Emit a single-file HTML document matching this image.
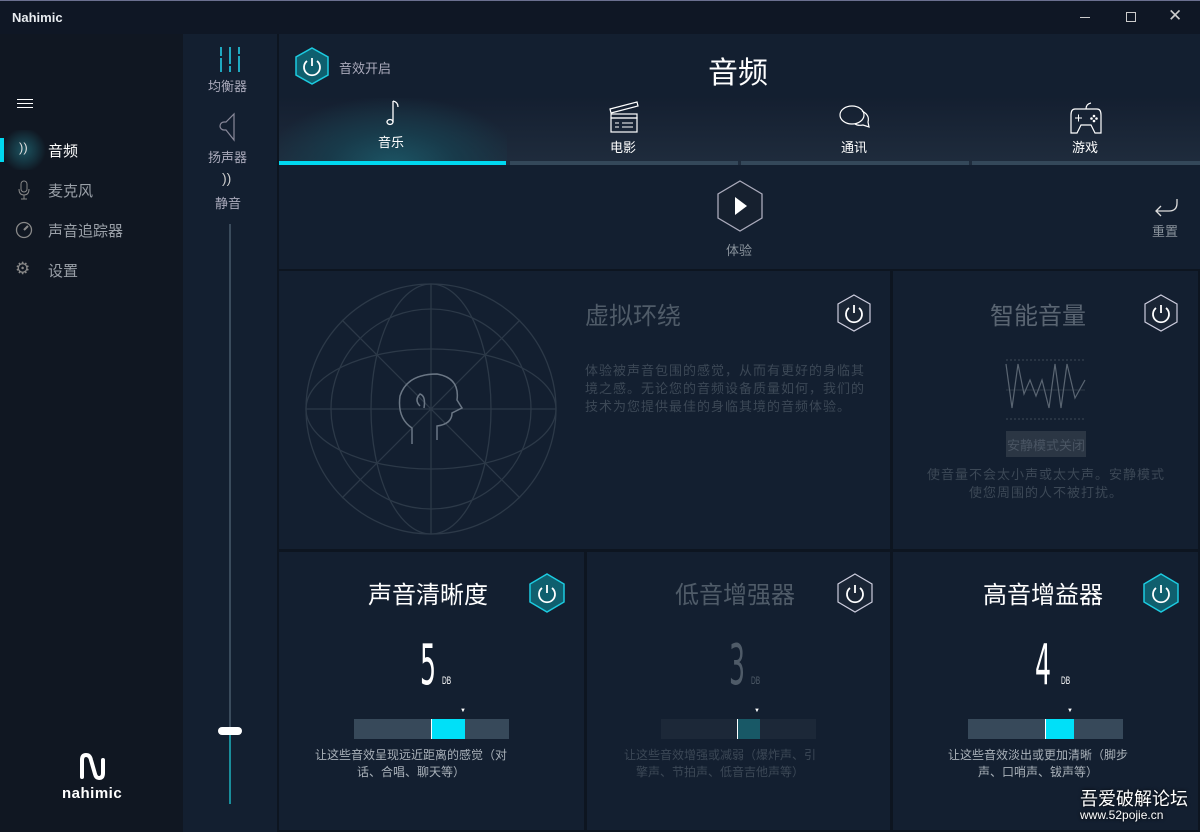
<!DOCTYPE html>
<html><head><meta charset="utf-8"><style>
*{margin:0;padding:0;box-sizing:border-box}
body{width:1200px;height:832px;background:#0d1520;font-family:"Liberation Sans","Noto Sans CJK SC",sans-serif;position:relative;overflow:hidden;color:#fff}
.a{position:absolute}
.t{position:absolute;white-space:nowrap}
.panel{position:absolute;background:#131f30}
.hex{position:absolute}
.num{position:absolute;white-space:nowrap;font-family:"DejaVu Sans","Liberation Sans",sans-serif;font-size:56px;line-height:56px;transform:scaleX(0.45);transform-origin:left}
</style></head><body>
<div class="a" style="left:0;top:0;width:1200px;height:34px;background:#0f1725;border-top:1px solid #6b7090"></div>
<div class="t" style="left:12px;top:10px;font-size:13px;font-weight:bold;color:#e8ecf0">Nahimic</div>
<div class="a" style="left:1080px;top:17px;width:10px;height:1px;background:#ccc"></div>
<div class="a" style="left:1126px;top:12px;width:10px;height:10px;border:1px solid #ccc"></div>
<div class="t" style="left:1168px;top:6px;font-size:17px;color:#ccc">✕</div>
<div class="a" style="left:0;top:34px;width:183px;height:798px;background:#101722"></div>
<div class="a" style="left:17px;top:99px;width:16px;height:1px;background:#fff;box-shadow:0 4px 0 #fff,0 8px 0 #fff"></div>
<div class="a" style="left:0;top:130px;width:50px;height:40px;background:radial-gradient(circle at 24px 20px,#1c5360 0,#153440 12px,rgba(16,23,34,0) 22px)"></div>
<div class="a" style="left:0;top:138px;width:4px;height:24px;background:#00d8f0"></div>
<div class="t" style="left:19px;top:140px;font-size:13px;color:#ddd">))</div>
<div class="t" style="left:48px;top:140px;font-size:15px;color:#fff">音频</div>
<svg class="a" style="left:17px;top:180px" width="14" height="20"><rect x="4" y="1" width="6" height="11" rx="3" stroke="#888" fill="none"/><path d="M2 9 Q2 15 7 15 Q12 15 12 9 M7 15V19M4 19H10" stroke="#888" fill="none"/></svg>
<div class="t" style="left:48px;top:180px;font-size:15px;color:#9aa0a8">麦克风</div>
<svg class="a" style="left:15px;top:221px" width="18" height="18"><circle cx="9" cy="9" r="7.5" stroke="#888" stroke-width="1.3" fill="none"/><path d="M9 9 L13 5" stroke="#888" stroke-width="2"/></svg>
<div class="t" style="left:48px;top:220px;font-size:15px;color:#9aa0a8">声音追踪器</div>
<div class="t" style="left:15px;top:259px;font-size:17px;color:#888">⚙</div>
<div class="t" style="left:48px;top:260px;font-size:15px;color:#9aa0a8">设置</div>
<svg class="a" style="left:78px;top:752px" width="30" height="30"><path d="M4 25 V8 Q4 3 8 3 Q12 3 13 8 L17 22 Q18 26 21 26 Q25 26 25 21 V8" stroke="#fff" stroke-width="4" fill="none" stroke-linecap="round"/></svg>
<div class="t" style="left:62px;top:785px;font-size:15px;font-weight:bold;color:#fff;letter-spacing:0.5px">nahimic</div>
<div class="a" style="left:183px;top:34px;width:94px;height:798px;background:#131f30"></div>
<svg class="a" style="left:218px;top:47px" width="24" height="25"><g stroke="#1fa9c0" stroke-width="2"><path d="M3 0V25M12 0V25M21 0V25"/></g><g stroke="#131f30" stroke-width="2"><path d="M3 9v2M12 17v2M21 7v2"/></g></svg>
<div class="t" style="left:208px;top:76px;font-size:13px;color:#aab">均衡器</div>
<svg class="a" style="left:218px;top:112px" width="24" height="30"><path d="M6 10 A4 4 0 0 0 6 18 L8 18 L16 28 V2 L8 10 Z" stroke="#889" stroke-width="1.2" fill="none"/></svg>
<div class="t" style="left:208px;top:147px;font-size:13px;color:#aab">扬声器</div>
<div class="t" style="left:222px;top:170px;font-size:14px;color:#ccc">))</div>
<div class="t" style="left:215px;top:193px;font-size:13px;color:#aab">静音</div>
<div class="a" style="left:229px;top:224px;width:2px;height:508px;background:#3a4b5c"></div>
<div class="a" style="left:229px;top:732px;width:2px;height:72px;background:#1a8d9a"></div>
<div class="a" style="left:218px;top:727px;width:24px;height:8px;background:#fff;border-radius:4px"></div>
<div class="panel" style="left:279px;top:34px;width:921px;height:235px"></div>
<div class="a" style="left:279px;top:98px;width:921px;height:67px;background:linear-gradient(#141f30,#1f2c3d)"></div>
<div class="a" style="left:279px;top:98px;width:228px;height:64px;background:radial-gradient(ellipse 130px 70px at 114px 68px,#1c5565 0,#183a4a 50%,rgba(25,40,55,0) 100%)"></div>
<svg class="hex" style="left:294px;top:47px" width="36" height="38"><polygon points="18,1 34,10 34,28 18,37 2,28 2,10" fill="#0f5f6e" stroke="#1ccbe0" stroke-width="1.5"/><path d="M13 14 A8 8 0 1 0 23 14" stroke="#fff" stroke-width="1.8" fill="none"/><path d="M18 11V19" stroke="#fff" stroke-width="1.8"/></svg>
<div class="t" style="left:339px;top:58px;font-size:13px;color:#aab">音效开启</div>
<div class="t" style="left:708px;top:48px;font-size:30px;color:#fff">音频</div>
<div class="a" style="left:279px;top:161px;width:227px;height:4px;background:#00d8f0"></div>
<div class="a" style="left:510px;top:161px;width:228px;height:4px;background:#34485a"></div>
<div class="a" style="left:741px;top:161px;width:228px;height:4px;background:#34485a"></div>
<div class="a" style="left:972px;top:161px;width:228px;height:4px;background:#34485a"></div>
<svg class="a" style="left:386px;top:99px" width="16" height="28"><path d="M7 2V23 M7 2 Q12 3 12 8" stroke="#fff" stroke-width="1.3" fill="none"/><ellipse cx="4" cy="23" rx="3" ry="2.5" stroke="#fff" stroke-width="1.3" fill="none"/></svg>
<div class="t" style="left:378px;top:132px;font-size:13px;color:#fff">音乐</div>
<svg class="a" style="left:607px;top:101px" width="34" height="32"><path d="M3 8 L30 1 L31 5 L4 12 Z" stroke="#fff" stroke-width="1.2" fill="none"/><rect x="4" y="13" width="26" height="4" stroke="#fff" stroke-width="1.2" fill="none"/><rect x="4" y="17" width="26" height="14" stroke="#fff" stroke-width="1.2" fill="none"/><path d="M15 22H26M15 26H26M8 22h4M8 26h4" stroke="#fff"/></svg>
<div class="t" style="left:610px;top:137px;font-size:13px;color:#fff">电影</div>
<svg class="a" style="left:838px;top:104px" width="34" height="26"><ellipse cx="14" cy="11" rx="12" ry="9" stroke="#fff" stroke-width="1.2" fill="none"/><path d="M24 7 Q32 11 30 18 L31 23 L25 21 Q20 22 17 20" stroke="#fff" stroke-width="1.2" fill="none"/></svg>
<div class="t" style="left:841px;top:137px;font-size:13px;color:#fff">通讯</div>
<svg class="a" style="left:1069px;top:101px" width="34" height="33"><path d="M17 8 Q17 3 22 2 M6 8 H28 Q32 8 32 14 L32 32 L26 32 L22 24 H12 L8 32 H2 L2 14 Q2 8 6 8 Z" stroke="#fff" stroke-width="1.2" fill="none"/><path d="M6 17h7M9.5 13.5v7" stroke="#fff"/><circle cx="25" cy="15" r="1.3" fill="#fff"/><circle cx="25" cy="20" r="1.3" fill="#fff"/><circle cx="22.5" cy="17.5" r="1.3" fill="#fff"/><circle cx="27.5" cy="17.5" r="1.3" fill="#fff"/></svg>
<div class="t" style="left:1072px;top:137px;font-size:13px;color:#fff">游戏</div>
<svg class="hex" style="left:716px;top:180px" width="48" height="52"><polygon points="24,1 46,14 46,38 24,51 2,38 2,14" fill="#16202f" stroke="#aab" stroke-width="1.3"/><path d="M19 17 L31 26 L19 35 Z" fill="#fff"/></svg>
<div class="t" style="left:726px;top:240px;font-size:13px;color:#8a939c">体验</div>
<svg class="a" style="left:1153px;top:197px" width="26" height="20"><path d="M24 2 V6 Q24 14 16 14 H3 M8 9 L3 14 L8 19" stroke="#ddd" stroke-width="1.3" fill="none"/></svg>
<div class="t" style="left:1152px;top:221px;font-size:13px;color:#8a939c">重置</div>
<div class="panel" style="left:279px;top:271px;width:611px;height:278px"></div>
<svg class="a" style="left:302px;top:278px" width="258" height="262"><g stroke="#2c3948" stroke-width="1.3" fill="none"><circle cx="129" cy="131" r="125"/><ellipse cx="129" cy="131" rx="125" ry="60"/><ellipse cx="129" cy="131" rx="60" ry="125"/><ellipse cx="129" cy="131" rx="100" ry="100"/><path d="M4 131H254M129 6V256M40 42L218 220M218 42L40 220"/></g><g stroke="#6b7785" stroke-width="1.5" fill="none"><path d="M135 162 L135 148 Q150 146 150 135 L160 130 L155 122 Q158 100 135 96 Q105 96 98 118 Q95 140 110 150 L110 166"/><path d="M118 128 Q112 122 118 116 Q124 118 122 130"/></g></svg>
<div class="t" style="left:585px;top:296px;font-size:24px;color:#4f5b68">虚拟环绕</div>
<svg class="hex" style="left:836px;top:294px" width="36" height="38"><polygon points="18,1 34,10 34,28 18,37 2,28 2,10" fill="#1a2535" stroke="#ccd" stroke-width="1.2"/><path d="M13 14 A8 8 0 1 0 23 14" stroke="#fff" stroke-width="1.8" fill="none"/><path d="M18 11V19" stroke="#fff" stroke-width="1.8"/></svg>
<div class="a" style="left:585px;top:362px;width:290px;font-size:13px;letter-spacing:1px;line-height:18px;color:#3c4856">体验被声音包围的感觉，从而有更好的身临其境之感。无论您的音频设备质量如何，我们的技术为您提供最佳的身临其境的音频体验。</div>
<div class="panel" style="left:893px;top:271px;width:305px;height:278px"></div>
<div class="t" style="left:990px;top:296px;font-size:24px;color:#5a6572">智能音量</div>
<svg class="hex" style="left:1143px;top:294px" width="36" height="38"><polygon points="18,1 34,10 34,28 18,37 2,28 2,10" fill="#1a2535" stroke="#ccd" stroke-width="1.2"/><path d="M13 14 A8 8 0 1 0 23 14" stroke="#fff" stroke-width="1.8" fill="none"/><path d="M18 11V19" stroke="#fff" stroke-width="1.8"/></svg>
<svg class="a" style="left:1005px;top:358px" width="82" height="62"><path d="M1 2H80M1 61H80" stroke="#3d4856" stroke-dasharray="2 2"/><path d="M1 32H80" stroke="#2c3846"/><path d="M1 6 L7 50 L13 6 L19 36 L25 22 L31 38 L37 22 L44 50 L50 6 L56 50 L62 6 L70 40 L80 22" stroke="#5a6572" stroke-width="1.2" fill="none"/></svg>
<div class="a" style="left:1006px;top:431px;width:80px;height:26px;background:#2b3644"></div>
<div class="t" style="left:1007px;top:435px;font-size:13px;color:#4a5563">安静模式关闭</div>
<div class="a" style="left:926px;top:466px;width:240px;text-align:center;font-size:13px;letter-spacing:1px;line-height:18px;color:#3c4856">使音量不会太小声或太大声。安静模式使您周围的人不被打扰。</div>
<div class="panel" style="left:279px;top:552px;width:305px;height:278px"></div>
<div class="panel" style="left:587px;top:552px;width:303px;height:278px"></div>
<div class="panel" style="left:893px;top:552px;width:305px;height:278px"></div>

<div class="t" style="left:368px;top:575px;font-size:24px;color:#fff">声音清晰度</div>
<svg class="hex" style="left:528px;top:573px" width="38" height="40"><polygon points="19,1 36,11 36,29 19,39 2,29 2,11" fill="#0f5f6e" stroke="#1ccbe0" stroke-width="1.5"/><path d="M14 15 A8 8 0 1 0 24 15" stroke="#fff" stroke-width="1.8" fill="none"/><path d="M19 12V20" stroke="#fff" stroke-width="1.8"/></svg>
<div class="num" style="left:420px;top:638px;color:#fff">5</div>
<div class="t" style="left:442px;top:675px;font-size:11px;color:#fff;transform:scaleX(.6);transform-origin:left">DB</div>
<div class="a" style="left:354px;top:719px;width:155px;height:20px;background:#37495a"></div>
<div class="a" style="left:431px;top:719px;width:34px;height:20px;background:#00e0f8;border-left:1px solid #fff"></div>
<div class="t" style="left:460px;top:708px;font-size:6px;color:#fff">▼</div>
<div class="a" style="left:312px;top:747px;width:198px;text-align:center;font-size:12px;line-height:17px;color:#a9b1b9">让这些音效呈现远近距离的感觉（对话、合唱、聊天等）</div>

<div class="t" style="left:675px;top:575px;font-size:24px;color:#4f5b68">低音增强器</div>
<svg class="hex" style="left:836px;top:573px" width="38" height="40"><polygon points="19,1 36,11 36,29 19,39 2,29 2,11" fill="#1a2535" stroke="#ccd" stroke-width="1.2"/><path d="M14 15 A8 8 0 1 0 24 15" stroke="#fff" stroke-width="1.8" fill="none"/><path d="M19 12V20" stroke="#fff" stroke-width="1.8"/></svg>
<div class="num" style="left:729px;top:638px;color:#4f5b68">3</div>
<div class="t" style="left:751px;top:675px;font-size:11px;color:#4f5b68;transform:scaleX(.6);transform-origin:left">DB</div>
<div class="a" style="left:661px;top:719px;width:155px;height:20px;background:#1c2838"></div>
<div class="a" style="left:737px;top:719px;width:23px;height:20px;background:#185866;border-left:1px solid #fff"></div>
<div class="t" style="left:754px;top:708px;font-size:6px;color:#fff">▼</div>
<div class="a" style="left:620px;top:747px;width:200px;text-align:center;font-size:12px;line-height:17px;color:#3c4856">让这些音效增强或减弱（爆炸声、引擎声、节拍声、低音吉他声等）</div>

<div class="t" style="left:983px;top:575px;font-size:24px;color:#fff">高音增益器</div>
<svg class="hex" style="left:1142px;top:573px" width="38" height="40"><polygon points="19,1 36,11 36,29 19,39 2,29 2,11" fill="#0f5f6e" stroke="#1ccbe0" stroke-width="1.5"/><path d="M14 15 A8 8 0 1 0 24 15" stroke="#fff" stroke-width="1.8" fill="none"/><path d="M19 12V20" stroke="#fff" stroke-width="1.8"/></svg>
<div class="num" style="left:1035px;top:638px;color:#fff">4</div>
<div class="t" style="left:1061px;top:675px;font-size:11px;color:#fff;transform:scaleX(.6);transform-origin:left">DB</div>
<div class="a" style="left:968px;top:719px;width:155px;height:20px;background:#37495a"></div>
<div class="a" style="left:1045px;top:719px;width:29px;height:20px;background:#00e0f8;border-left:1px solid #fff"></div>
<div class="t" style="left:1067px;top:708px;font-size:6px;color:#fff">▼</div>
<div class="a" style="left:938px;top:747px;width:200px;text-align:center;font-size:12px;line-height:17px;color:#a9b1b9">让这些音效淡出或更加清晰（脚步声、口哨声、钹声等）</div>

<div class="t" style="left:1080px;top:785px;font-size:18px;color:#fff;text-shadow:0 0 3px #000">吾爱破解论坛</div>
<div class="t" style="left:1080px;top:808px;font-size:12px;color:#fff;text-shadow:0 0 3px #000">www.52pojie.cn</div>
</body></html>
